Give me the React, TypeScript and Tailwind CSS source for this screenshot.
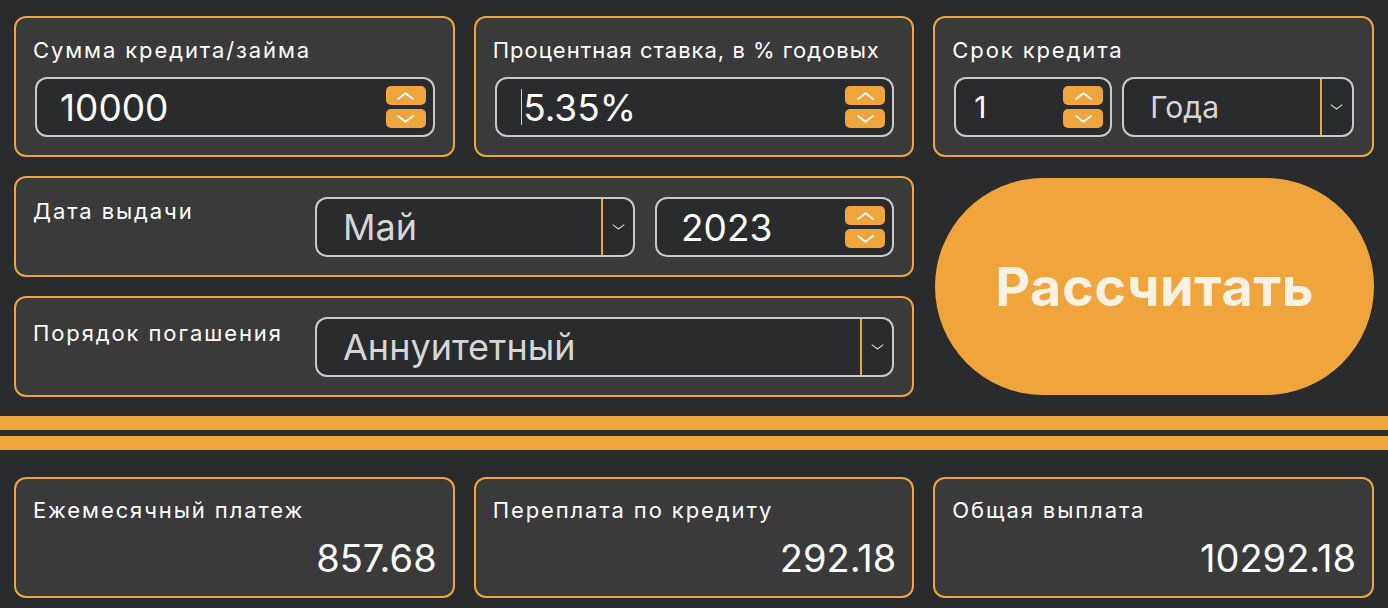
import React from "react";

const font = { fontFamily: "Inter, 'Noto Sans', sans-serif" };

function Chevron({ up, className, sw = 1.8 }: { up?: boolean; className?: string; sw?: number }) {
  return (
    <svg viewBox="0 0 18 8" className={className} fill="none" stroke="currentColor" strokeWidth={sw} strokeLinecap="round" strokeLinejoin="round">
      {up ? <path d="M1.5 7 L9 1.2 L16.5 7" /> : <path d="M1.5 1 L9 6.8 L16.5 1" />}
    </svg>
  );
}

function Spinner() {
  return (
    <div className="flex flex-col gap-[4px]">
      <div className="w-[40px] h-[19px] rounded-[5px] bg-[#f0a53c] flex items-center justify-center text-white">
        <Chevron up className="w-[19px] h-[8px]" />
      </div>
      <div className="w-[40px] h-[19px] rounded-[5px] bg-[#f0a53c] flex items-center justify-center text-white">
        <Chevron className="w-[19px] h-[8px]" />
      </div>
    </div>
  );
}

function NumInput({ value, cursor, className, textClass }: { value: string; cursor?: boolean; className?: string; textClass?: string }) {
  return (
    <div className={"h-[60px] rounded-[12px] border-2 border-[#c9c9c9] bg-[#2a2b2d] flex items-center pr-[7px] " + (className ?? "pl-[23px]")}>
      <div className={"flex-1 flex items-center text-white leading-none " + (textClass ?? "text-[37px]")}>
        {cursor && <span className="w-[1.5px] h-[36px] bg-[#cfcfcf] mr-[1px]" />}
        {value}
      </div>
      <Spinner />
    </div>
  );
}

function Select({ value, className, textClass }: { value: string; className?: string; textClass?: string }) {
  return (
    <div className={"h-[60px] rounded-[12px] border-2 border-[#c9c9c9] bg-[#2a2b2d] flex items-stretch " + (className ?? "")}>
      <div className={"flex-1 flex items-center pl-[26px] text-[#d6d6d6] leading-none " + (textClass ?? "text-[36px]")}>{value}</div>
      <div className="w-[2px] bg-[#f0a53c]" />
      <div className="w-[30px] flex items-center justify-center text-[#d6d6d6]">
        <Chevron className="w-[13px] h-[6px]" sw={1.6} />
      </div>
    </div>
  );
}

function Card({ children, className }: { children: React.ReactNode; className?: string }) {
  return (
    <div className={"rounded-[12px] border-2 border-[#f0a53c] bg-[#3a3a3a] " + (className ?? "")}>{children}</div>
  );
}

const labelCls = "text-white text-[22px] leading-[28px] whitespace-nowrap";

function Result({ label, value }: { label: string; value: string }) {
  return (
    <Card className="h-[121px] pl-[17px] pr-[16px] pt-[17px] flex flex-col">
      <div className={labelCls + " tracking-[1.9px]"}>{label}</div>
      <div className="text-white text-[38px] leading-none text-right mt-[15px]">{value}</div>
    </Card>
  );
}

export default function App() {
  return (
    <div className="w-[1388px] h-[608px] bg-[#2a2b2d] overflow-hidden" style={font}>
      <div className="px-[14px] pt-[16px] grid grid-cols-3 gap-[19px]">
        <Card className="h-[141px] pl-[17px] pr-[18px] pt-[18px]">
          <div className={labelCls + " tracking-[1.9px]"}>Сумма кредита/займа</div>
          <NumInput value="10000" className="mt-[13px] ml-[2px] pl-[23px]" />
        </Card>
        <Card className="h-[141px] pl-[17px] pr-[18px] pt-[18px]">
          <div className={labelCls + " tracking-[1px]"}>Процентная ставка, в % годовых</div>
          <NumInput value="5.35%" cursor className="mt-[13px] ml-[2px] pl-[24px]" />
        </Card>
        <Card className="h-[141px] pl-[17px] pr-[18px] pt-[18px]">
          <div className={labelCls + " tracking-[1.9px]"}>Срок кредита</div>
          <div className="mt-[13px] ml-[2px] flex gap-[10px]">
            <NumInput value="1" className="w-[158px] pl-[18px]" textClass="text-[30px]" />
            <Select value="Года" className="flex-1" textClass="text-[30px]" />
          </div>
        </Card>

        <div className="col-span-2 flex flex-col gap-[19px]">
          <Card className="h-[101px] pl-[17px] pr-[18px] pt-[19px] flex">
            <div className={"w-[282px] tracking-[1.9px] " + labelCls}>Дата выдачи</div>
            <Select value="Май" className="w-[320px]" />
            <NumInput value="2023" className="ml-[20px] flex-1 pl-[24px]" />
          </Card>
          <Card className="h-[101px] pl-[17px] pr-[18px] pt-[19px] flex">
            <div className={"w-[282px] pt-[2px] tracking-[1.9px] " + labelCls}>Порядок погашения</div>
            <Select value="Аннуитетный" className="flex-1" />
          </Card>
        </div>
        <div className="pl-[2px] py-[2px]">
          <button className="w-full h-full rounded-full bg-[#f0a53c] text-[#fdf1e3] text-[54px] font-bold tracking-[0.5px] flex items-center justify-center">
            Рассчитать
          </button>
        </div>
      </div>

      <div className="mt-[19px] h-[14px] bg-[#f0a53c]" />
      <div className="mt-[6px] h-[14px] bg-[#f0a53c]" />

      <div className="px-[14px] mt-[27px] grid grid-cols-3 gap-[19px]">
        <Result label="Ежемесячный платеж" value="857.68" />
        <Result label="Переплата по кредиту" value="292.18" />
        <Result label="Общая выплата" value="10292.18" />
      </div>
    </div>
  );
}
